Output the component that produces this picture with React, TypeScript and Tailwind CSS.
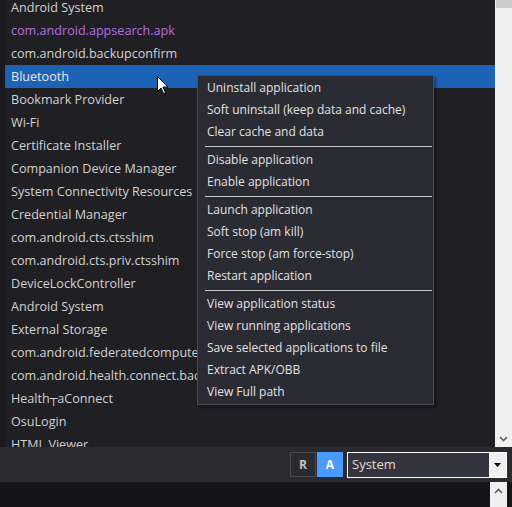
import React from "react";

type Row = { label: string; tone?: "purple"; selected?: boolean };

const rows: Row[] = [
  { label: "Android System" },
  { label: "com.android.appsearch.apk", tone: "purple" },
  { label: "com.android.backupconfirm" },
  { label: "Bluetooth", selected: true },
  { label: "Bookmark Provider" },
  { label: "Wi-Fi" },
  { label: "Certificate Installer" },
  { label: "Companion Device Manager" },
  { label: "System Connectivity Resources" },
  { label: "Credential Manager" },
  { label: "com.android.cts.ctsshim" },
  { label: "com.android.cts.priv.ctsshim" },
  { label: "DeviceLockController" },
  { label: "Android System" },
  { label: "External Storage" },
  { label: "com.android.federatedcompute" },
  { label: "com.android.health.connect.backuprestore" },
  { label: "Health\u252CaConnect" },
  { label: "OsuLogin" },
  { label: "HTML Viewer" },
];

const menuGroups: string[][] = [
  ["Uninstall application", "Soft uninstall (keep data and cache)", "Clear cache and data"],
  ["Disable application", "Enable application"],
  ["Launch application", "Soft stop (am kill)", "Force stop (am force-stop)", "Restart application"],
  [
    "View application status",
    "View running applications",
    "Save selected applications to file",
    "Extract APK/OBB",
    "View Full path",
  ],
];

const font = { fontFamily: '"Open Sans", "DejaVu Sans", sans-serif' };

function Chevron({ up }: { up?: boolean }) {
  return (
    <svg width="9" height="6" viewBox="0 0 9 6">
      <path
        d={up ? "M1 5 L4.5 1.5 L8 5" : "M1 1 L4.5 4.5 L8 1"}
        fill="none"
        stroke="#606060"
        strokeWidth="1.6"
      />
    </svg>
  );
}

function Cursor() {
  return (
    <svg width="12" height="19" viewBox="0 0 12 19" className="absolute left-[157px] top-[76px]">
      <path
        d="M0.5 0.5 L0.5 15.5 L4 12 L6.5 17.5 L8.5 16.5 L6 11 L11 11 Z"
        fill="#ffffff"
        stroke="#000000"
        strokeWidth="1"
        strokeLinejoin="miter"
      />
    </svg>
  );
}

export default function App() {
  return (
    <div
      className="relative w-[512px] h-[507px] overflow-hidden bg-[#141419] flex flex-col text-[12px] leading-none"
      style={font}
    >
      {/* package list + vertical scrollbar */}
      <div className="h-[447px] flex">
        <div className="flex-1 overflow-hidden bg-[#1f1f24] border-l-[5px] border-[#1a1a1e] text-[12.6px]">
          <div className="-mt-[4px]">
            {rows.map((r, i) => (
              <div
                key={i}
                className={
                  "h-[23px] flex items-center pl-[6px] pt-[2px] whitespace-nowrap " +
                  (r.selected
                    ? "bg-[#1c62b5] text-[#e8e8e8]"
                    : r.tone === "purple"
                    ? "text-[#b570e8]"
                    : "text-[#d2d2d2]")
                }
              >
                {r.label}
              </div>
            ))}
          </div>
        </div>
        <div className="w-[17px] bg-[#f0f0f0] flex flex-col justify-between">
          <div className="h-[8px] ml-[1px] bg-[#cdcdcd]" />
          <div className="h-[17px] flex items-center justify-center">
            <Chevron />
          </div>
        </div>
      </div>

      {/* filter bar */}
      <div className="h-[35px] bg-[#2a2a2f] flex items-center justify-end pr-[5px] gap-[1px]">
        <div className="w-[26px] h-[25px] border border-[#48484e] flex items-center justify-center font-bold text-[#c4c4c4] text-[12px]">
          R
        </div>
        <div className="w-[26px] h-[25px] bg-[#4a9bff] flex items-center justify-center font-bold text-white text-[12px]">
          A
        </div>
        <div className="ml-[3px] w-[160px] h-[26px] border border-white flex">
          <div className="flex-1 bg-[#343440] flex items-center pl-[4px] text-[13px] text-[#e4dccf]">System</div>
          <div className="w-[17px] bg-[#f0f0f0] flex items-center justify-center">
            <svg width="7" height="4" viewBox="0 0 7 4">
              <path d="M0 0 L7 0 L3.5 4 Z" fill="#000" />
            </svg>
          </div>
        </div>
      </div>

      {/* lower panel with next scrollbar */}
      <div className="flex-1 flex justify-end pr-[5px]">
        <div className="w-[17px] bg-[#f0f0f0] flex items-start justify-center pt-[6px]">
          <Chevron up />
        </div>
      </div>

      {/* context menu */}
      <div className="absolute left-[197px] top-[75px] w-[237px] bg-[#2b2b33] border border-[#4c4c53] py-[1px] text-[#e2e2e2] shadow-[2px_2px_3px_rgba(0,0,0,0.4)]">
        {menuGroups.map((g, gi) => (
          <div key={gi}>
            {gi > 0 && (
              <div className="h-[6px] flex items-center pl-[7px] pr-[1px]">
                <div className="h-px w-full bg-[#c8c8c8]" />
              </div>
            )}
            {g.map((item) => (
              <div key={item} className="h-[22px] flex items-center pl-[9px] whitespace-nowrap">
                {item}
              </div>
            ))}
          </div>
        ))}
      </div>

      <Cursor />
    </div>
  );
}
